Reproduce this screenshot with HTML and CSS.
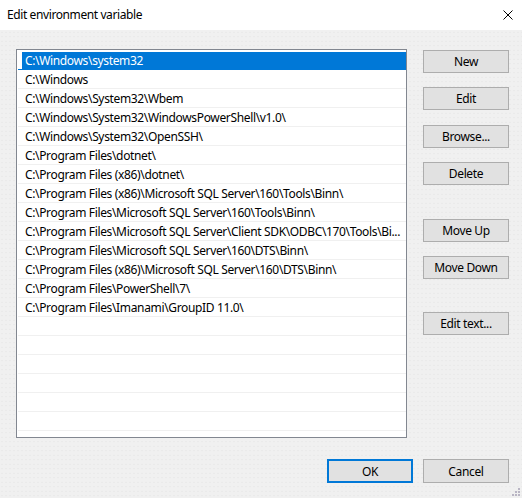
FILE: index.html
```html
<!DOCTYPE html>
<html lang="en">
<head>
    <meta charset="UTF-8">
    <meta name="viewport" content="width=device-width, initial-scale=1.0">
    <title>Edit environment variable</title>
    <link rel="stylesheet" href="styles.css">
</head>
<body>
    <div class="dialog">
        <div class="titlebar">
            <span class="title">Edit environment variable</span>
            <svg class="close" width="10" height="10" viewBox="0 0 10 10">
                <path d="M0.5 0.5 L9.5 9.5 M9.5 0.5 L0.5 9.5" stroke="#000" stroke-width="1" fill="none"/>
            </svg>
        </div>
        <div class="body">
            <div class="main">
                <div class="path-list">
                    <div class="row selected">C:\Windows\system32</div>
                    <div class="row">C:\Windows</div>
                    <div class="row">C:\Windows\System32\Wbem</div>
                    <div class="row">C:\Windows\System32\WindowsPowerShell\v1.0\</div>
                    <div class="row">C:\Windows\System32\OpenSSH\</div>
                    <div class="row">C:\Program Files\dotnet\</div>
                    <div class="row">C:\Program Files (x86)\dotnet\</div>
                    <div class="row">C:\Program Files (x86)\Microsoft SQL Server\160\Tools\Binn\</div>
                    <div class="row">C:\Program Files\Microsoft SQL Server\160\Tools\Binn\</div>
                    <div class="row">C:\Program Files\Microsoft SQL Server\Client SDK\ODBC\170\Tools\Bi...</div>
                    <div class="row">C:\Program Files\Microsoft SQL Server\160\DTS\Binn\</div>
                    <div class="row">C:\Program Files (x86)\Microsoft SQL Server\160\DTS\Binn\</div>
                    <div class="row">C:\Program Files\PowerShell\7\</div>
                    <div class="row">C:\Program Files\Imanami\GroupID 11.0\</div>
                    <div class="row"></div>
                    <div class="row"></div>
                    <div class="row"></div>
                    <div class="row"></div>
                    <div class="row"></div>
                    <div class="row"></div>
                </div>
                <div class="actions">
                    <button class="btn btn-new">New</button>
                    <button class="btn btn-edit">Edit</button>
                    <button class="btn btn-browse">Browse...</button>
                    <button class="btn btn-delete">Delete</button>
                    <button class="btn btn-up">Move Up</button>
                    <button class="btn btn-down">Move Down</button>
                    <button class="btn btn-text">Edit text...</button>
                </div>
            </div>
            <div class="footer">
                <button class="btn btn-default">OK</button>
                <button class="btn">Cancel</button>
            </div>
            <svg class="grip" width="8" height="8" viewBox="0 0 8 8">
                <rect x="6" y="0" width="2" height="2" fill="#b9b5c4"/>
                <rect x="3" y="3" width="2" height="2" fill="#b9b5c4"/>
                <rect x="6" y="3" width="2" height="2" fill="#b9b5c4"/>
                <rect x="0" y="6" width="2" height="2" fill="#b9b5c4"/>
                <rect x="3" y="6" width="2" height="2" fill="#b9b5c4"/>
                <rect x="6" y="6" width="2" height="2" fill="#b9b5c4"/>
            </svg>
        </div>
    </div>
</body>
</html>
```

FILE: styles.css
```css
body {
    margin: 0;
    font-family: 'Noto Sans', 'Segoe UI', sans-serif;
    font-size: 12px;
    letter-spacing: -0.35px;
    color: #000;
    background: #f0f0f0;
}

.dialog {
    width: 522px;
    height: 498px;
    display: flex;
    flex-direction: column;
}

.titlebar {
    height: 30px;
    flex: none;
    background: #fff;
    display: flex;
    align-items: center;
    justify-content: space-between;
    padding: 0 9px 0 7px;
}

.title {
    line-height: 16px;
    letter-spacing: -0.4px;
}

.close {
    display: block;
}

.body {
    position: relative;
    flex: 1;
    padding: 19px 13px 0 16px;
    background-color: #f0f0f0;
    background-image: radial-gradient(circle, #e8e8e8 0.5px, transparent 0.8px);
    background-size: 4px 4.5px;
}

.main {
    display: flex;
    gap: 16px;
}

.path-list {
    width: 391px;
    height: 389px;
    box-sizing: border-box;
    border: 1px solid #828790;
    background: #fff;
    padding: 1px 0 0 1px;
    overflow: hidden;
}

.row {
    height: 19px;
    box-sizing: border-box;
    border-bottom: 1px solid #f0f0f0;
    padding: 1px 4px 0 7px;
    line-height: 17px;
    white-space: nowrap;
    overflow: hidden;
}

.row.selected {
    color: #fff;
    border-bottom-color: #0078d7;
    background: linear-gradient(to right, transparent 4px, #0078d7 4px) 0 1px / 100% 100% no-repeat;
}

.actions {
    display: flex;
    flex-direction: column;
    padding-top: 1px;
}

.btn {
    width: 86px;
    height: 23px;
    box-sizing: border-box;
    padding: 0;
    border: 1px solid #adadad;
    background: #e1e1e1;
    font-family: inherit;
    font-size: 12px;
    letter-spacing: inherit;
    color: #000;
}

.btn-edit,
.btn-down {
    margin-top: 14px;
}

.btn-browse {
    margin-top: 15px;
}

.btn-delete {
    margin-top: 14px;
}

.btn-up {
    margin-top: 34px;
}

.btn-text {
    margin-top: 33px;
}

.footer {
    display: flex;
    justify-content: flex-end;
    gap: 10px;
    margin-top: 21px;
}

.footer .btn {
    height: 24px;
}

.btn-default {
    border: 2px solid #0078d7;
}

.grip {
    position: absolute;
    right: 2px;
    bottom: 2px;
}
```
